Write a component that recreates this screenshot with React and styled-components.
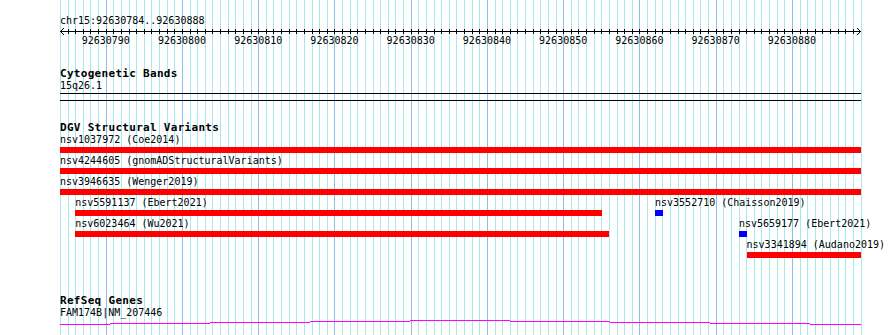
import React from 'react';
import styled, { createGlobalStyle } from 'styled-components';

const START = 92630784;
const NBASES = 105;
const TRACK_W = 801;
const BP = 800.5 / NBASES;
const MONO = '"DejaVu Sans Mono", "Liberation Mono", monospace';

const Global = createGlobalStyle`
  html, body { margin: 0; padding: 0; background: #fff; }
  body { font-family: ${MONO}; font-size: 10px; color: #000; }
`;

const Page = styled.div`
  position: relative;
  width: 890px;
  height: 335px;
  overflow: hidden;
  padding-left: 60px;
  box-sizing: border-box;
`;

const GridSvg = styled.svg`
  position: absolute;
  left: 60px;
  top: 0;
  z-index: 0;
  shape-rendering: crispEdges;
`;

const Tracks = styled.div`
  position: relative;
  z-index: 1;
  width: ${TRACK_W}px;
  display: flex;
  flex-direction: column;
`;

const RulerBlock = styled.section`
  padding-top: 15px;
  height: 48px;
  box-sizing: border-box;
  display: flex;
  flex-direction: column;
`;

const Locus = styled.div`
  line-height: 12px;
  white-space: nowrap;
`;

const RulerSvg = styled.svg`
  display: block;
  overflow: visible;
`;

const Track = styled.section`
  display: flex;
  flex-direction: column;
  margin-top: ${(p) => p.$gap}px;
`;

const TrackTitle = styled.h3`
  margin: 0;
  font-family: ${MONO};
  font-weight: bold;
  font-size: 11px;
  line-height: 13px;
  letter-spacing: 0.3px;
  white-space: nowrap;
`;

const Label = styled.div`
  line-height: 12px;
  white-space: nowrap;
`;

const BandBox = styled.div`
  margin-top: 1px;
  height: 8px;
  box-sizing: border-box;
  border-top: 1px solid #000;
  border-bottom: 1px solid #000;
`;

const Row = styled.div`
  display: grid;
  grid-template-columns: repeat(${NBASES}, minmax(0, 1fr));
  height: 21px;
`;

const Feature = styled.div`
  grid-row: 1;
  grid-column: ${(p) => p.$start + 1} / ${(p) => p.$end + 1};
  min-width: 0;
  display: flex;
  flex-direction: column;
  overflow: visible;
`;

const Bar = styled.div`
  margin-top: 1px;
  height: 6px;
  background: ${(p) => p.$color};
`;

const GeneSvg = styled.svg`
  display: block;
  shape-rendering: crispEdges;
`;

const RED = '#ff0000';
const BLUE = '#0000ff';

const dgvRows = [
  [{ label: 'nsv1037972 (Coe2014)', s: 0, e: 105, c: RED }],
  [{ label: 'nsv4244605 (gnomADStructuralVariants)', s: 0, e: 105, c: RED }],
  [{ label: 'nsv3946635 (Wenger2019)', s: 0, e: 105, c: RED }],
  [
    { label: 'nsv5591137 (Ebert2021)', s: 2, e: 71, c: RED },
    { label: 'nsv3552710 (Chaisson2019)', s: 78, e: 79, c: BLUE },
  ],
  [
    { label: 'nsv6023464 (Wu2021)', s: 2, e: 72, c: RED },
    { label: 'nsv5659177 (Ebert2021)', s: 89, e: 90, c: BLUE },
  ],
  [{ label: 'nsv3341894 (Audano2019)', s: 90, e: 105, c: RED }],
];

const geneSteps = [
  [0, 50, 5],
  [50, 150, 4],
  [150, 250, 3],
  [250, 350, 2],
  [350, 450, 1],
  [450, 550, 2],
  [550, 650, 3],
  [650, 750, 4],
  [750, 801, 5],
];

function GridLines() {
  const lines = [];
  for (let i = 0; i <= NBASES; i++) {
    const x = Math.round(i * BP) + 0.5;
    const major = i >= 6 && (i - 6) % 10 === 0;
    lines.push(
      <line key={i} x1={x} x2={x} y1={0} y2={335} stroke={major ? '#88c2e8' : '#a6e9ec'} strokeWidth={1} />
    );
  }
  return (
    <GridSvg width={802} height={335}>
      {lines}
    </GridSvg>
  );
}

function Ruler() {
  const ticks = [];
  for (let i = 1; i < NBASES; i++) {
    const x = Math.round(i * BP) + 0.5;
    ticks.push(<line key={i} x1={x} x2={x} y1={2} y2={7} stroke="#000" />);
  }
  const labels = [];
  for (let i = 6; i < NBASES; i += 10) {
    labels.push(
      <text key={i} x={i * BP} y={17} textAnchor="middle" fontFamily={MONO} fontSize="10" fill="#000">
        {START + i}
      </text>
    );
  }
  return (
    <RulerSvg width={TRACK_W} height={21}>
      <g shapeRendering="crispEdges">
        <line x1={0} x2={800.5} y1={4.5} y2={4.5} stroke="#000" />
        {ticks}
      </g>
      <polyline points="4,1 0.5,4.5 4,8" fill="none" stroke="#000" />
      <polyline points="797,1 800.5,4.5 797,8" fill="none" stroke="#000" />
      {labels}
    </RulerSvg>
  );
}

export default function App() {
  return (
    <>
      <Global />
      <Page>
        <GridLines />
        <Tracks>
          <RulerBlock>
            <Locus>chr15:92630784..92630888</Locus>
            <Ruler />
          </RulerBlock>

          <Track $gap={19}>
            <TrackTitle>Cytogenetic Bands</TrackTitle>
            <Label>15q26.1</Label>
            <BandBox />
          </Track>

          <Track $gap={20}>
            <TrackTitle>DGV Structural Variants</TrackTitle>
            {dgvRows.map((row, ri) => (
              <Row key={ri}>
                {row.map((f) => (
                  <Feature key={f.label} $start={f.s} $end={f.e}>
                    <Label>{f.label}</Label>
                    <Bar $color={f.c} />
                  </Feature>
                ))}
              </Row>
            ))}
          </Track>

          <Track $gap={34}>
            <TrackTitle>RefSeq Genes</TrackTitle>
            <Label>FAM174B|NM_207446</Label>
            <GeneSvg width={TRACK_W} height={7}>
              {geneSteps.map(([a, b, y]) => (
                <rect key={a} x={a} y={y} width={b - a} height={1} fill="#ff00ff" />
              ))}
            </GeneSvg>
          </Track>
        </Tracks>
      </Page>
    </>
  );
}
